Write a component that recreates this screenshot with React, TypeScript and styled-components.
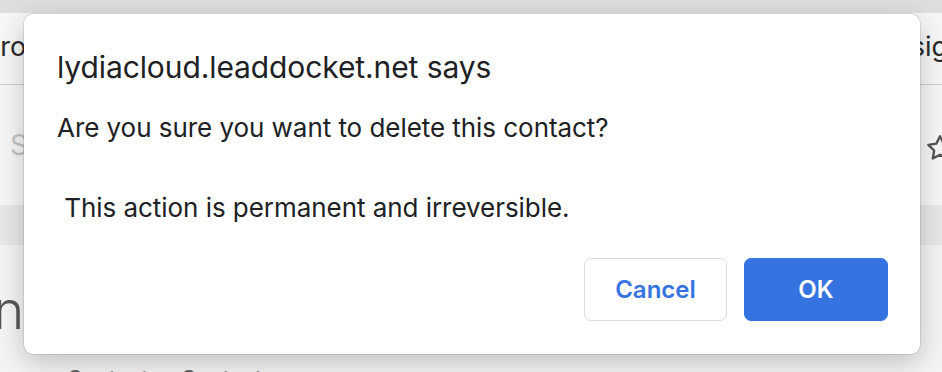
import React from "react";
import styled, { createGlobalStyle } from "styled-components";

const Global = createGlobalStyle`
  html, body { margin: 0; padding: 0; }
  body {
    width: 942px;
    height: 372px;
    overflow: hidden;
    background: #f4f4f4;
    font-family: Inter, "Noto Sans", "Liberation Sans", sans-serif;
  }
`;

const Page = styled.div`
  position: relative;
  width: 942px;
  height: 372px;
  overflow: hidden;
  background: #f4f4f4;
`;

const TopStrip = styled.div`
  height: 13px;
  background: #dedede;
`;

const NavRow = styled.div`
  height: 71px;
  display: flex;
  align-items: center;
  justify-content: space-between;
  background: #f7f7f7;
  border-bottom: 1px solid #cfcfcf;
  font-size: 27px;
  color: #2b2b2b;
  white-space: nowrap;
`;

const NavItem = styled.span<{ $left?: number; $right?: number }>`
  margin-left: ${(p) => p.$left ?? 0}px;
  margin-right: ${(p) => p.$right ?? 0}px;
  margin-bottom: 4px;
`;

const SearchRow = styled.div`
  height: 120px;
  display: flex;
  align-items: center;
  justify-content: space-between;
  background: #f7f7f7;
  padding: 0 0 0 10px;
  font-size: 28px;
  color: #c4c4c4;
`;

const Star = styled.svg`
  margin-right: -12px;
  margin-top: 6px;
`;

const Band = styled.div`
  height: 40px;
  background: #e8e8e8;
`;

const Heading = styled.div`
  width: 24px;
  display: flex;
  justify-content: flex-end;
  margin-top: 36px;
  font-size: 52px;
  line-height: 60px;
  font-weight: 300;
  color: #555;
  white-space: nowrap;
`;

const Crumbs = styled.div`
  margin: 24px 0 0 52px;
  font-size: 22px;
  line-height: 26px;
  color: #666;
  white-space: nowrap;
`;

const Dialog = styled.div`
  position: absolute;
  left: 24px;
  top: 14px;
  width: 896px;
  height: 340px;
  box-sizing: border-box;
  background: #ffffff;
  border-radius: 9px;
  box-shadow: 0 0 0 0.5px rgba(0, 0, 0, 0.18), 0 8px 28px rgba(0, 0, 0, 0.22);
  padding: 35px 32px 0 33px;
  display: flex;
  flex-direction: column;
  color: #202124;
`;

const Title = styled.div`
  font-size: 30px;
  line-height: 36px;
  letter-spacing: -0.1px;
`;

const Message = styled.div`
  margin-top: 23px;
  font-size: 26px;
  line-height: 40px;
  white-space: pre;
  letter-spacing: -0.05px;
`;

const Buttons = styled.div`
  display: flex;
  justify-content: flex-end;
  gap: 17px;
  margin-top: 30px;
`;

const Button = styled.button<{ $primary?: boolean }>`
  width: ${(p) => (p.$primary ? 144 : 143)}px;
  height: 63px;
  border-radius: 7px;
  font-family: inherit;
  font-size: 24px;
  font-weight: 600;
  border: 1px solid ${(p) => (p.$primary ? "#3574e0" : "#dcdcdc")};
  background: ${(p) => (p.$primary ? "#3574e0" : "#ffffff")};
  color: ${(p) => (p.$primary ? "#ffffff" : "#3574e0")};
  padding: 0;
`;

export default function App() {
  return (
    <>
      <Global />
      <Page>
        <TopStrip />
        <NavRow>
          <NavItem $left={-17}>Products</NavItem>
          <NavItem $right={-22}>Design</NavItem>
        </NavRow>
        <SearchRow>
          <span>S</span>
          <Star width="28" height="28" viewBox="0 0 24 24" fill="none" stroke="#555" strokeWidth="2" strokeLinejoin="round">
            <polygon points="12 2 15.09 8.26 22 9.27 17 14.14 18.18 21.02 12 17.77 5.82 21.02 7 14.14 2 9.27 8.91 8.26 12 2" />
          </Star>
        </SearchRow>
        <Band />
        <Heading>Person</Heading>
        <Crumbs>›  Contacts  ›  Contacts</Crumbs>
        <Dialog role="dialog">
          <Title>lydiacloud.leaddocket.net says</Title>
          <Message>{"Are you sure you want to delete this contact?\n\n This action is permanent and irreversible."}</Message>
          <Buttons>
            <Button>Cancel</Button>
            <Button $primary>OK</Button>
          </Buttons>
        </Dialog>
      </Page>
    </>
  );
}
